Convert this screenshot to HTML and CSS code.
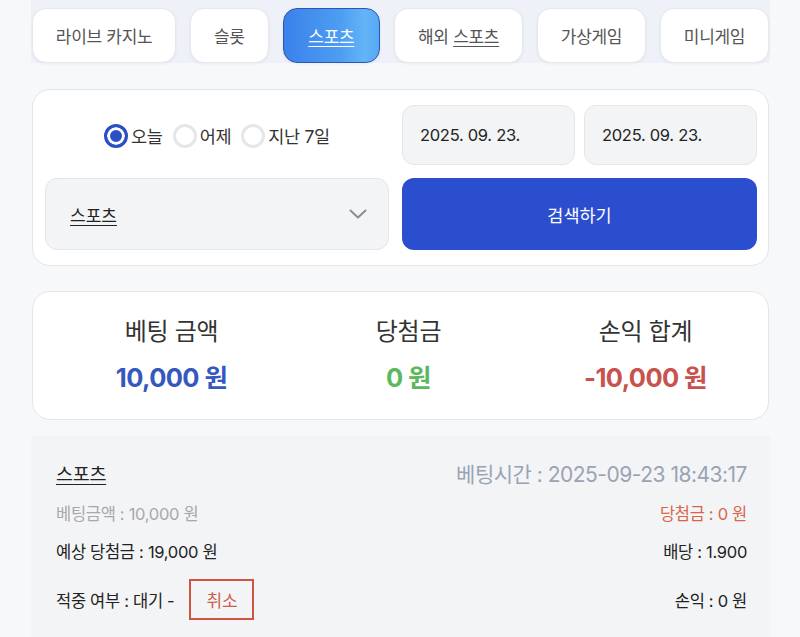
FILE: index.html
```html
<!DOCTYPE html>
<html lang="ko">
<head>
<meta charset="utf-8">
<title>베팅내역</title>
<link rel="stylesheet" href="styles.css">
</head>
<body>
<div class="page">
  <nav class="tabs">
    <a class="tab"><span>라이브 카지노</span></a>
    <a class="tab"><span>슬롯</span></a>
    <a class="tab active"><span><u>스포츠</u></span></a>
    <a class="tab"><span>해외 <u>스포츠</u></span></a>
    <a class="tab"><span>가상게임</span></a>
    <a class="tab"><span>미니게임</span></a>
  </nav>

  <section class="card filter">
    <div class="radios">
      <label class="radio checked"><span class="dot"></span><span>오늘</span></label>
      <label class="radio"><span class="dot"></span><span>어제</span></label>
      <label class="radio"><span class="dot"></span><span>지난 7일</span></label>
    </div>
    <div class="dates">
      <div class="field">2025. 09. 23.</div>
      <div class="field">2025. 09. 23.</div>
    </div>
    <div class="select">
      <u>스포츠</u>
      <svg class="chev" width="18" height="10" viewBox="0 0 18 10"><path d="M1.5 1.5 L9 8.5 L16.5 1.5" fill="none" stroke="#8a8d93" stroke-width="2" stroke-linecap="round" stroke-linejoin="round"/></svg>
    </div>
    <button class="search">검색하기</button>
  </section>

  <section class="card summary">
    <div class="stat">
      <div class="label">베팅 금액</div>
      <div class="value blue">10,000 원</div>
    </div>
    <div class="stat">
      <div class="label">당첨금</div>
      <div class="value green">0 원</div>
    </div>
    <div class="stat">
      <div class="label">손익 합계</div>
      <div class="value red">-10,000 원</div>
    </div>
  </section>

  <section class="bet">
    <div class="row r1">
      <span class="game"><u>스포츠</u></span>
      <span class="time">베팅시간 : 2025-09-23 18:43:17</span>
    </div>
    <div class="row r2">
      <span class="muted">베팅금액 : 10,000 원</span>
      <span class="win">당첨금 : 0 원</span>
    </div>
    <div class="row r3">
      <span>예상 당첨금 : 19,000 원</span>
      <span>배당 : 1.900</span>
    </div>
    <div class="row r4">
      <span class="status"><span>적중 여부 : 대기 -</span><span class="cancel">취소</span></span>
      <span>손익 : 0 원</span>
    </div>
  </section>
</div>
</body>
</html>
```

FILE: styles.css
```css
* { box-sizing: border-box; }

html, body {
  margin: 0;
  padding: 0;
  background: #f7f8fa;
}

body {
  font-family: Inter, "Noto Sans CJK KR", sans-serif;
  color: #222;
}

.page {
  margin-left: 31px;
  width: 739px;
}

u { text-underline-offset: 3px; text-decoration-thickness: 1px; }

/* Tabs */
.tabs {
  display: flex;
  gap: 14px;
  height: 63px;
  padding: 8px 1px 0 1px;
  background: #eff1f8;
}

.tab {
  flex: 1 0 auto;
  white-space: nowrap;
  display: flex;
  align-items: center;
  justify-content: center;
  height: 55px;
  padding: 0 22px;
  background: #fff;
  border: 1px solid #e6e8ee;
  border-radius: 14px;
  font-size: 17px;
  color: #555;
  letter-spacing: -0.3px;
  box-shadow: 0 1px 3px rgba(30, 40, 90, 0.06);
}

.tab.active {
  color: #fff;
  border: 1px solid #2c56b4;
  background: linear-gradient(90deg, #3a81eb 0%, #4d9ef2 60%, #64b4f7 85%, #55a8f5 100%);
  padding: 0 24px;
}

/* Cards */
.card {
  margin-left: 1px;
  width: 737px;
  background: #fff;
  border: 1px solid #e3e5ea;
  border-radius: 18px;
}

.filter {
  margin-top: 26px;
  display: grid;
  grid-template-columns: 344px 355px;
  grid-template-rows: 60px 72px;
  column-gap: 13px;
  row-gap: 13px;
  padding: 15px 11px 15px 12px;
}

.radios {
  display: flex;
  align-items: center;
  justify-content: center;
  gap: 10px;
  font-size: 17.5px;
  color: #333;
  padding-top: 1px;
  letter-spacing: -0.3px;
}

.radio {
  display: flex;
  align-items: center;
  gap: 3px;
}

.dot {
  width: 24px;
  height: 24px;
  border-radius: 50%;
  border: 3px solid #e6e6e8;
  background: #fff;
}

.radio.checked .dot {
  border: 3px solid #2b50c4;
  background: #2b50c4;
  box-shadow: inset 0 0 0 3px #fff;
}

.dates {
  display: grid;
  grid-template-columns: 1fr 1fr;
  gap: 9px;
}

.field {
  display: flex;
  align-items: center;
  padding-left: 17px;
  background: #f3f4f6;
  border: 1px solid #e4e6ea;
  border-radius: 12px;
  font-size: 16.5px;
  color: #222;
  letter-spacing: -0.3px;
}

.select {
  display: flex;
  align-items: center;
  justify-content: space-between;
  padding: 0 21px 0 24px;
  background: #f3f4f6;
  border: 1px solid #e4e6ea;
  border-radius: 12px;
  font-size: 17px;
  color: #222;
}

.chev { display: block; }

.search {
  border: none;
  border-radius: 12px;
  background: #2b4ecf;
  color: #fff;
  font-family: inherit;
  font-size: 17.5px;
}

/* Summary */
.summary {
  margin-top: 25px;
  height: 129px;
  display: grid;
  grid-template-columns: repeat(3, 1fr);
  padding: 0 4px 0 20px;
  align-content: center;
}

.stat {
  display: flex;
  flex-direction: column;
  align-items: center;
  gap: 15px;
}

.label {
  font-size: 24px;
  color: #333;
  line-height: 30px;
  letter-spacing: -0.3px;
}

.value {
  font-size: 25.5px;
  font-weight: 700;
  line-height: 32px;
  letter-spacing: -0.6px;
}

.blue { color: #3557c0; }
.green { color: #5cb85f; }
.red { color: #c8524d; }

/* Bet item */
.bet {
  margin-top: 16px;
  background: #f3f4f6;
  padding: 23px 23px 20px 25px;
  font-size: 16.5px;
  color: #222;
  letter-spacing: -0.3px;
}

.row {
  display: flex;
  justify-content: space-between;
  align-items: center;
}

.r1 { height: 28px; }
.r2 { height: 24px; margin-top: 14px; }
.r3 { height: 24px; margin-top: 14px; }
.r4 { height: 41px; margin-top: 16px; }

.game { font-size: 18.5px; }

.time {
  font-size: 21px;
  color: #9aa3b4;
  letter-spacing: -0.5px;
}

.muted { color: #a8a8ab; }
.win { color: #d8654b; }

.status {
  display: flex;
  align-items: center;
}

.cancel {
  margin-left: 15px;
  width: 65px;
  height: 41px;
  display: flex;
  align-items: center;
  justify-content: center;
  border: 2px solid #cf5442;
  color: #cf5c49;
  font-size: 17px;
}
```
